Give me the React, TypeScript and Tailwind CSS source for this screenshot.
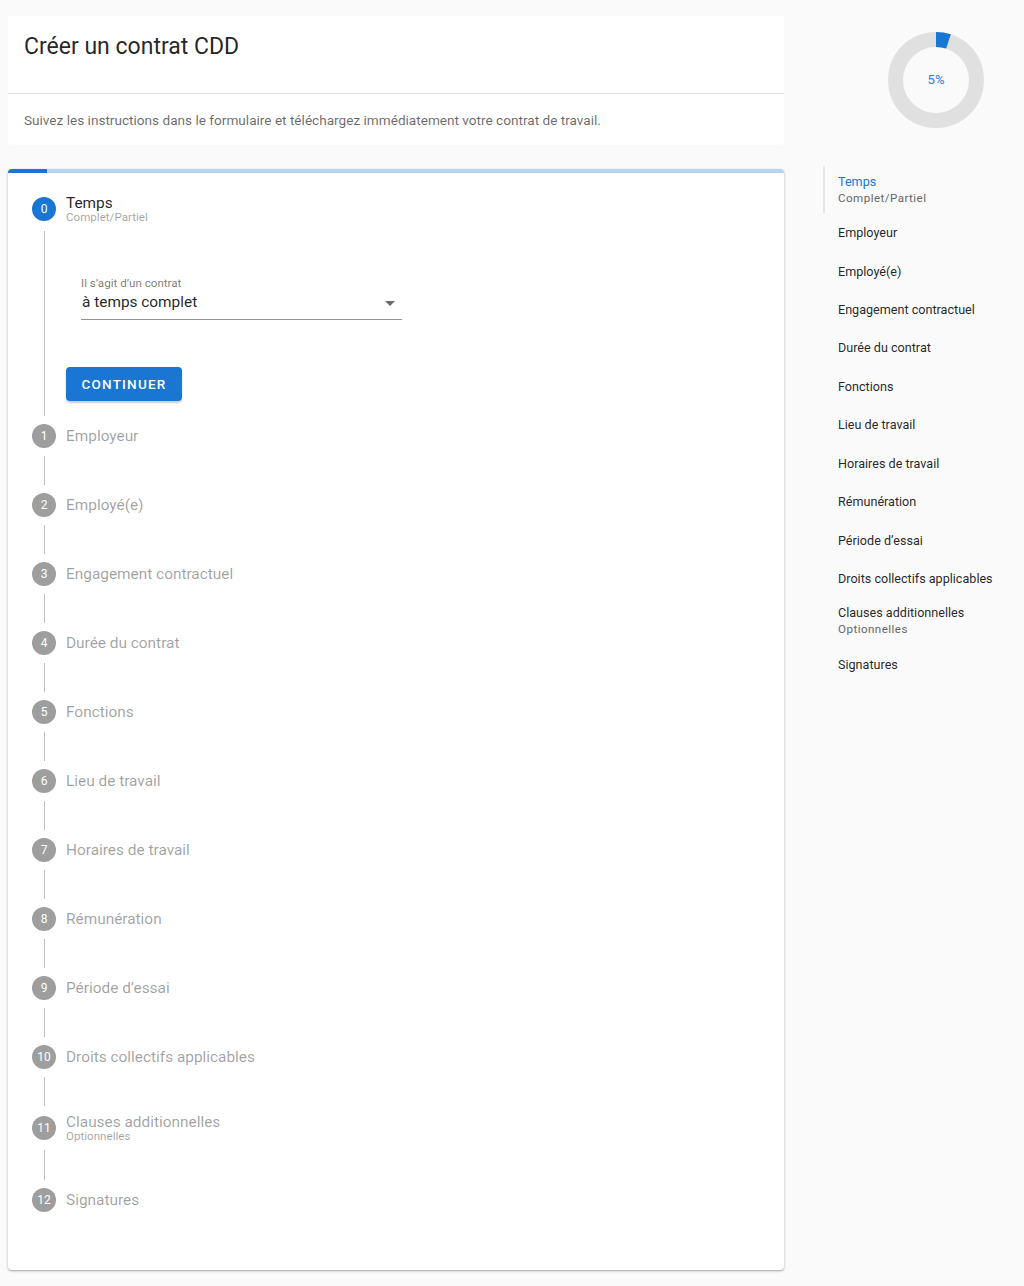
const steps = [
  { label: "Temps", sub: "Complet/Partiel" },
  { label: "Employeur" },
  { label: "Employé(e)" },
  { label: "Engagement contractuel" },
  { label: "Durée du contrat" },
  { label: "Fonctions" },
  { label: "Lieu de travail" },
  { label: "Horaires de travail" },
  { label: "Rémunération" },
  { label: "Période d’essai" },
  { label: "Droits collectifs applicables" },
  { label: "Clauses additionnelles", sub: "Optionnelles" },
  { label: "Signatures" },
];

function StepHeader({ index, label, sub, active }: any) {
  return (
    <div className={`flex items-center gap-2.5 ${sub ? "h-7" : "h-6"}`}>
      <div
        className={`w-6 h-6 rounded-full flex items-center justify-center text-[12px] text-white shrink-0 ${
          active ? "bg-[#1976d2]" : "bg-[#9e9e9e]"
        }`}
      >
        {index}
      </div>
      <div className="flex flex-col">
        <span className={`text-[15.4px] leading-4 ${active ? "text-[rgba(0,0,0,0.87)]" : "text-[rgba(0,0,0,0.38)]"}`}>
          {label}
        </span>
        {sub && <span className="text-[11.6px] leading-3 text-[rgba(0,0,0,0.38)]">{sub}</span>}
      </div>
    </div>
  );
}

function Connector({ children, last }: any) {
  return (
    <div className="flex">
      <div className="w-6 shrink-0 flex justify-center py-2">
        {!last && <div className="w-px bg-[#bdbdbd]" />}
      </div>
      <div className="flex-1 ml-[10px]">{children}</div>
    </div>
  );
}

function TempsContent() {
  return (
    <div className="pt-[52px] pb-[23px]">
      <div className="ml-[15px] w-[321px] border-b border-[#949494] pb-[4px]">
        <div className="text-[11.6px] leading-4 text-[rgba(0,0,0,0.54)]">Il s’agit d’un contrat</div>
        <div className="flex items-center justify-between h-6">
          <span className="text-[15.4px] text-[rgba(0,0,0,0.87)] ml-px">à temps complet</span>
          <svg width="10" height="5" viewBox="0 0 10 5" className="mr-[7px]">
            <path d="M0 0 L10 0 L5 5 Z" fill="#6b6b6b" />
          </svg>
        </div>
      </div>
      <button className="mt-[47px] h-[34px] w-[116px] rounded bg-[#1976d2] text-white text-[13.5px] font-medium tracking-[1.2px] shadow-[0_2px_2px_rgba(0,0,0,0.2)]">
        CONTINUER
      </button>
    </div>
  );
}

function Stepper() {
  return (
    <div className="bg-white rounded shadow-[0_1px_3px_rgba(0,0,0,0.25),0_1px_1px_rgba(0,0,0,0.12)] overflow-hidden">
      <div className="h-1 bg-[#b6d4f2]">
        <div className="h-1 w-[5%] bg-[#1976d2]" />
      </div>
      <div className="pt-[22px] pb-[58px] px-6">
        {steps.map((s, i) => (
          <div key={i}>
            <StepHeader index={i} label={s.label} sub={s.sub} active={i === 0} />
            {i === 0 ? (
              <Connector>
                <TempsContent />
              </Connector>
            ) : i < steps.length - 1 ? (
              <Connector>
                <div className={i === 11 ? "h-[46px]" : "h-[45px]"} />
              </Connector>
            ) : null}
          </div>
        ))}
      </div>
    </div>
  );
}

function Donut() {
  const r = 40.5;
  const c = 2 * Math.PI * r;
  return (
    <div className="relative w-24 h-24">
      <svg width="96" height="96" viewBox="0 0 96 96">
        <circle cx="48" cy="48" r={r} fill="none" stroke="#e0e0e0" strokeWidth="15" />
        <circle
          cx="48"
          cy="48"
          r={r}
          fill="none"
          stroke="#1976d2"
          strokeWidth="15"
          strokeDasharray={`${c * 0.05} ${c}`}
          transform="rotate(-90 48 48)"
        />
      </svg>
      <div className="absolute inset-0 flex items-center justify-center text-[13px] text-[#2f7bd6]">5%</div>
    </div>
  );
}

function Sidebar() {
  return (
    <div className="w-[216px] ml-6 pt-4">
      <div className="ml-20 mt-4">
        <Donut />
      </div>
      <div className="mt-[38px] ml-[15px]">
        {steps.map((s, i) => (
          <div
            key={i}
            className={`flex flex-col justify-center pl-[13px] ${s.sub ? "h-[47.4px]" : "h-[38.44px]"} ${
              i === 0 ? "border-l-2 border-[#e6e6e6]" : "border-l-2 border-transparent"
            }`}
          >
            <span className={`text-[12.6px] leading-[17px] ${i === 0 ? "text-[#1976d2]" : "text-[rgba(0,0,0,0.87)]"}`}>
              {s.label}
            </span>
            {s.sub && (
              <span className="text-[11.6px] leading-[17px] tracking-[0.45px] text-[#666]">{s.sub}</span>
            )}
          </div>
        ))}
      </div>
    </div>
  );
}

export default function App() {
  return (
    <div className="min-h-[1286px] bg-[#fafafa] flex font-['Roboto',sans-serif]">
      <div className="w-[776px] ml-2 pt-4 pb-4 flex flex-col gap-6">
        <div className="bg-white rounded">
          <div className="h-[77px] px-4 flex items-start pt-[17px]">
            <h1 className="text-[23px] leading-[28px] text-[rgba(0,0,0,0.87)]">Créer un contrat CDD</h1>
          </div>
          <div className="border-t border-[#e0e0e0] h-[52px] px-4 flex items-center">
            <p className="text-[13.6px] text-[rgba(0,0,0,0.6)] pt-px">
              Suivez les instructions dans le formulaire et téléchargez immédiatement votre contrat de travail.
            </p>
          </div>
        </div>
        <Stepper />
      </div>
      <Sidebar />
    </div>
  );
}
